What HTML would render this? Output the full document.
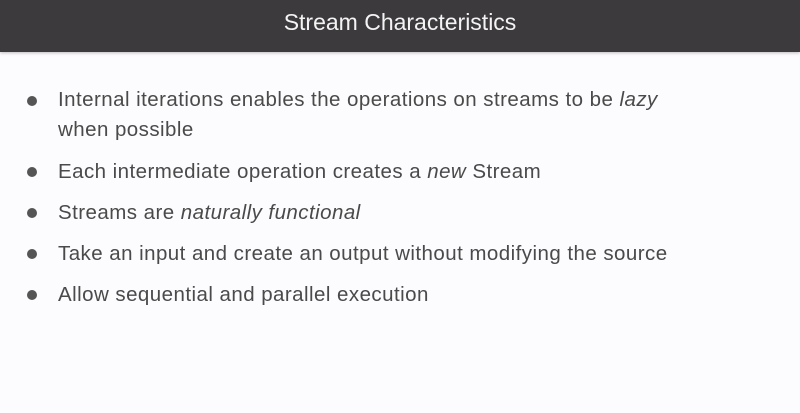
<!DOCTYPE html>
<html><head><style>
body{margin:0;width:800px;height:413px;background:#fcfbfd;font-family:"Liberation Sans",sans-serif;overflow:hidden;position:relative}
.h{position:absolute;left:0;top:0;width:800px;height:52px;background:#3c3a3d;color:#f4f4f4;font-size:23px;text-align:center;line-height:44px;box-shadow:0 1px 3px rgba(0,0,0,.25)}
.l{position:absolute;left:58px;font-size:20.5px;letter-spacing:0.45px;color:#4a4a4a;line-height:30px;white-space:nowrap}
.b{position:absolute;left:27px;width:10px;height:10px;border-radius:50%;background:#555}
</style></head><body>
<div class="h">Stream Characteristics</div>
<div class="b" style="top:96px"></div><div class="l" style="top:85px">Internal iterations enables the operations on streams to be <i>lazy</i></div>
<div class="l" style="top:115px">when possible</div>
<div class="b" style="top:167px"></div><div class="l" style="top:157px">Each intermediate operation creates a <i>new</i> Stream</div>
<div class="b" style="top:208px"></div><div class="l" style="top:198px">Streams are <i>naturally functional</i></div>
<div class="b" style="top:249px"></div><div class="l" style="top:239px">Take an input and create an output without modifying the source</div>
<div class="b" style="top:290px"></div><div class="l" style="top:280px">Allow sequential and parallel execution</div>
</body></html>
